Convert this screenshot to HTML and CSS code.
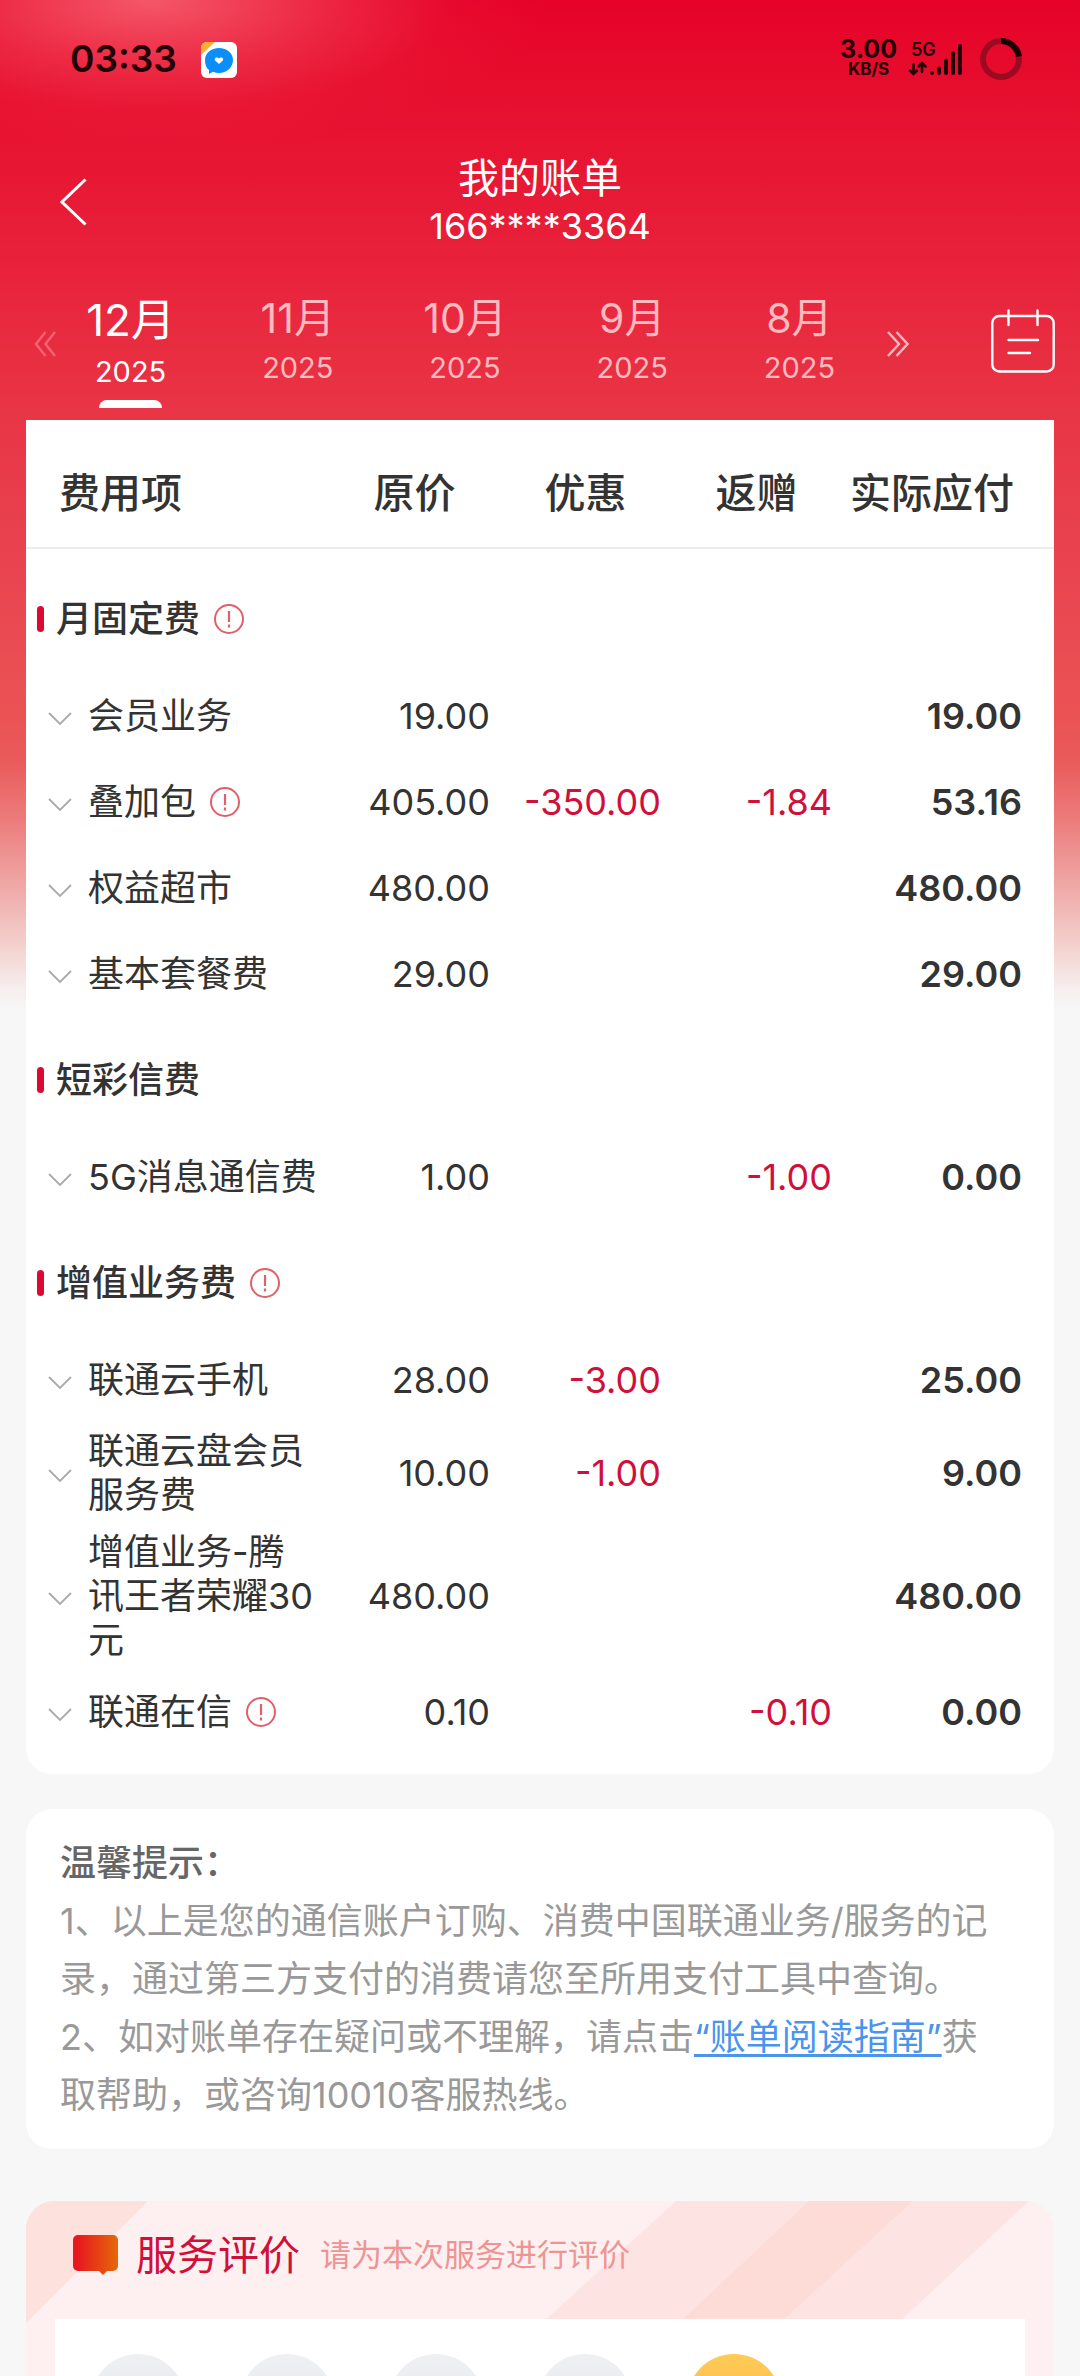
FILE: index.html
```html
<!DOCTYPE html>
<html lang="zh-CN">
<head>
<meta charset="utf-8">
<meta name="viewport" content="width=device-width, initial-scale=1">
<title>我的账单</title>
<link rel="stylesheet" href="styles.css">
</head>
<body>
<svg class="defs" aria-hidden="true">
  <symbol id="info" viewBox="0 0 30 30"><circle cx="15" cy="15" r="14" fill="none" stroke="currentColor" stroke-width="2"/><path d="M15 7v11M15 20.500v3" fill="none" stroke="currentColor" stroke-width="2.200"/></symbol>
  <symbol id="down" viewBox="0 0 24 14"><path d="M1 1l11 11L23 1" fill="none" stroke="currentColor" stroke-width="1.800"/></symbol>
</svg>
<div class="app">
  <header>
    <div class="status">
      <span class="clock">03:33</span>
      <svg class="chat" viewBox="0 0 36 36"><rect width="36" height="36" rx="6" fill="#fff"/><path d="M0 13V6a6 6 0 0 1 6-6h8z" fill="#fbb02d"/><path d="M18 6c8 0 14 5 14 12s-6 13-14 13c-2 0-4-.4-6-1.300L8 32V28c-3-2-4-6-4-10C4 11 10 6 18 6z" fill="#0a8ff8"/><path d="M18 22l-3.600-3.200c-1.400-1.400-.2-3.600 1.600-3.400 1 0 1.600.6 2 1.200.4-.6 1-1.200 2-1.200 1.800-.2 3 2 1.600 3.400z" fill="#fff"/></svg>
      <span class="speed"><b>3.00</b><small>KB/S</small></span>
      <span class="network">
        <b>5G</b>
        <svg viewBox="0 0 54 34" width="54" height="34"><g fill="none" stroke="#240006" stroke-linecap="round"><path d="M24 31v0M31 26.500v4.500M38 18.500V31M45 11.500V31M52 4v27" stroke-width="4"/><path d="M5.500 22.500V31M2 28.500l3.500 3.500L9 28.500M14 30v-8.500M10.500 24.500L14 21l3.500 3.500" stroke-width="2.600"/></g></svg>
      </span>
      <svg class="battery" viewBox="0 0 42 42"><circle cx="21" cy="21" r="18" fill="none" stroke="#9c0a22" stroke-width="6"/><path d="M21 3a18 18 0 0 1 17.800 15.500" fill="none" stroke="#1c0004" stroke-width="6"/></svg>
    </div>
    <div class="titlebar">
      <button class="back" aria-label="返回"><svg viewBox="0 0 27 48" width="27" height="48"><path d="M25.500 1.500L2 24l23.500 22.500" fill="none" stroke="#fff" stroke-width="3"/></svg></button>
      <h1>我的账单<span>166****3364</span></h1>
    </div>
    <nav class="months">
      <button class="step prev" aria-label="更早"><svg viewBox="0 0 22 26" width="22" height="26"><path d="M11.500 1L2 13l9.500 12M21 1l-9.500 12L21 25" fill="none" stroke="currentColor" stroke-width="2.400"/></svg></button>
      <div class="tabs" role="tablist">
        <button class="tab active" role="tab" aria-selected="true"><span class="month">12月</span><span class="year">2025</span></button>
        <button class="tab" role="tab"><span class="month">11月</span><span class="year">2025</span></button>
        <button class="tab" role="tab"><span class="month">10月</span><span class="year">2025</span></button>
        <button class="tab" role="tab"><span class="month">9月</span><span class="year">2025</span></button>
        <button class="tab" role="tab"><span class="month">8月</span><span class="year">2025</span></button>
      </div>
      <button class="step next" aria-label="更多"><svg viewBox="0 0 22 26" width="22" height="26"><path d="M1 1l11 12L1 25M9.500 1l11 12-11 12" fill="none" stroke="currentColor" stroke-width="2.400"/></svg></button>
      <button class="calendar" aria-label="日历"><svg viewBox="0 0 64 64" width="64" height="64"><g fill="none" stroke="#fff" stroke-width="2.400" stroke-linecap="round"><rect x="1.300" y="7" width="61.400" height="55.500" rx="7"/><path d="M17.500 1.500V16M46.500 1.500V16M17.500 31H47M17.500 44H39"/></g></svg></button>
    </nav>
  </header>

  <main>
    <section class="card bill">
      <table>
        <colgroup><col><col class="c-num"><col class="c-num"><col class="c-num"><col class="c-total"></colgroup>
        <thead><tr><th scope="col">费用项</th><th scope="col">原价</th><th scope="col">优惠</th><th scope="col">返赠</th><th scope="col">实际应付</th></tr></thead>
        <tbody>
          <tr class="group"><th colspan="5" scope="rowgroup"><div><span>月固定费</span><button class="info" aria-label="说明"><svg><use href="#info"/></svg></button></div></th></tr>
          <tr><th scope="row"><div class="item"><button class="more" aria-label="展开"><svg><use href="#down"/></svg></button><span>会员业务</span></div></th><td>19.00</td><td></td><td></td><td>19.00</td></tr>
          <tr><th scope="row"><div class="item"><button class="more" aria-label="展开"><svg><use href="#down"/></svg></button><span>叠加包</span><button class="info" aria-label="说明"><svg><use href="#info"/></svg></button></div></th><td>405.00</td><td>-350.00</td><td>-1.84</td><td>53.16</td></tr>
          <tr><th scope="row"><div class="item"><button class="more" aria-label="展开"><svg><use href="#down"/></svg></button><span>权益超市</span></div></th><td>480.00</td><td></td><td></td><td>480.00</td></tr>
          <tr><th scope="row"><div class="item"><button class="more" aria-label="展开"><svg><use href="#down"/></svg></button><span>基本套餐费</span></div></th><td>29.00</td><td></td><td></td><td>29.00</td></tr>
        </tbody>
        <tbody>
          <tr class="group"><th colspan="5" scope="rowgroup"><div><span>短彩信费</span></div></th></tr>
          <tr><th scope="row"><div class="item"><button class="more" aria-label="展开"><svg><use href="#down"/></svg></button><span>5G消息通信费</span></div></th><td>1.00</td><td></td><td>-1.00</td><td>0.00</td></tr>
        </tbody>
        <tbody>
          <tr class="group"><th colspan="5" scope="rowgroup"><div><span>增值业务费</span><button class="info" aria-label="说明"><svg><use href="#info"/></svg></button></div></th></tr>
          <tr><th scope="row"><div class="item"><button class="more" aria-label="展开"><svg><use href="#down"/></svg></button><span>联通云手机</span></div></th><td>28.00</td><td>-3.00</td><td></td><td>25.00</td></tr>
          <tr><th scope="row"><div class="item"><button class="more" aria-label="展开"><svg><use href="#down"/></svg></button><span>联通云盘会员服务费</span></div></th><td>10.00</td><td>-1.00</td><td></td><td>9.00</td></tr>
          <tr><th scope="row"><div class="item"><button class="more" aria-label="展开"><svg><use href="#down"/></svg></button><span>增值业务-腾<br>讯王者荣耀30元</span></div></th><td>480.00</td><td></td><td></td><td>480.00</td></tr>
          <tr><th scope="row"><div class="item"><button class="more" aria-label="展开"><svg><use href="#down"/></svg></button><span>联通在信</span><button class="info" aria-label="说明"><svg><use href="#info"/></svg></button></div></th><td>0.10</td><td></td><td>-0.10</td><td>0.00</td></tr>
        </tbody>
      </table>
    </section>

    <section class="card tips">
      <h2>温馨提示：</h2>
      <p>1、以上是您的通信账户订购、消费中国联通业务/服务的记录，通过第三方支付的消费请您至所用支付工具中查询。</p>
      <p>2、如对账单存在疑问或不理解，请点击<a href="#guide">“账单阅读指南”</a>获取帮助，或咨询10010客服热线。</p>
    </section>

    <section class="rating">
      <svg class="stripes" viewBox="0 0 1028 122" preserveAspectRatio="none" aria-hidden="true">
        <path d="M0 0h122L0 122z" fill="#fde1dd"/>
        <path d="M650 0h353L872 122H516z" fill="#fde4e2"/>
        <path d="M783 0h104L754 122H653z" fill="#fddad6" opacity=".8"/>
      </svg>
      <div class="rating-head">
        <svg viewBox="0 0 45 40" width="45" height="40"><defs><linearGradient id="warm"><stop offset=".1" stop-color="#e81820"/><stop offset="1" stop-color="#e46a06"/></linearGradient></defs><path d="M5 0h35a5 5 0 0 1 5 5v26a5 5 0 0 1-5 5h-6l-4 4-4-4H5a5 5 0 0 1-5-5V5a5 5 0 0 1 5-5z" fill="url(#warm)"/></svg>
        <h2>服务评价</h2>
        <p>请为本次服务进行评价</p>
      </div>
      <div class="scores" role="radiogroup" aria-label="服务评价">
        <input type="radio" name="score" aria-label="1">
        <input type="radio" name="score" aria-label="2">
        <input type="radio" name="score" aria-label="3">
        <input type="radio" name="score" aria-label="4">
        <input type="radio" name="score" aria-label="5" checked>
      </div>
    </section>
  </main>
</div>
</body>
</html>
```
FILE: styles.css
```css
* { box-sizing: border-box; margin: 0; padding: 0; }

body {
  font-family: Inter, "Noto Sans CJK SC", sans-serif;
  font-size: 36px;
  line-height: 44px;
  color: #333;
  background: #f7f7f7;
}

button { border: 0; background: none; color: inherit; font: inherit; }
svg { display: block; }
.defs { display: none; }

.app {
  height: 100vh;
  overflow: hidden;
  display: flex;
  flex-direction: column;
  background:
    radial-gradient(ellipse 400px 150px at 150px 0, rgba(250, 120, 130, .72), rgba(248, 100, 112, .35) 45%, rgba(245, 70, 85, .1) 75%, rgba(240, 50, 70, 0)),
    linear-gradient(#e60229 0, #e60a2b 60px, #e8203a 250px, #e83545 410px, #e94450 570px, #ea5254 710px, #ea5a5a 760px, #ec7c7c 820px, #efa4a3 880px, #f3cdc9 940px, #f6efee 990px, #f7f7f7 1010px);
}

/* Status bar */
.status { display: flex; align-items: center; height: 118px; padding: 0 58px 0 70px; color: #240006; }
.clock { font-size: 37px; font-weight: 600; }
.chat { width: 36px; height: 36px; margin: 2px auto 0 24px; }
.speed { display: flex; flex-direction: column; align-items: center; }
.speed b { font-size: 25px; line-height: 20px; font-weight: 700; }
.speed small { font-size: 17px; line-height: 20px; font-weight: 700; }
.network { display: grid; margin: 0 18px 0 11px; }
.network b { grid-area: 1 / 1; font-size: 18px; line-height: 16px; font-weight: 600; padding-left: 3px; }
.network svg { grid-area: 1 / 1; }
.battery { width: 42px; height: 42px; }

/* Title */
.titlebar { display: grid; grid-template-columns: 1fr auto 1fr; align-items: center; padding: 36px 60px 0; color: #fff; }
.titlebar h1 { font-size: 41px; line-height: 48px; font-weight: 400; text-align: center; }
.titlebar h1 span { display: block; font-size: 36px; line-height: 48px; }

/* Month tabs */
.months { display: flex; padding: 40px 25px 0 34px; color: #fff; }
.tabs { flex: 1; display: grid; grid-template-columns: repeat(5, 1fr); margin-left: -10px; }
.tab { display: flex; flex-direction: column; align-items: center; height: 130px; padding-left: 2px; color: #ffb9bf; }
.month { font-size: 41px; line-height: 56px; }
.year { font-size: 29px; line-height: 44px; }
.active { color: #fff; }
.active .month { font-size: 44px; line-height: 60px; }
.active::after { content: ""; width: 63px; height: 8px; margin-top: 6px; border-radius: 8px 8px 0 0; background: #fff; }
.step { align-self: flex-start; padding-top: 41px; }
.prev { color: #f26474; }
.next { margin: 0 82px 0 5px; color: #ffb9bf; }
.calendar { align-self: flex-start; padding-top: 19px; }

/* Cards */
main { flex: 1; min-height: 0; padding: 0 26px; display: flex; flex-direction: column; }
.card { flex: none; background: #fff; border-radius: 26px; }

.bill { border-radius: 0 0 26px 26px; padding-bottom: 19px; }
table { width: 100%; table-layout: fixed; border-collapse: collapse; }
.c-num { width: 171px; }
.c-total { width: 212px; }
thead th { padding: 51px 0 32px; font-size: 41px; font-weight: 500; border-bottom: 2px solid #ececec; }
thead th:first-child { padding-left: 33px; text-align: left; }
thead th:last-child { padding-right: 32px; white-space: nowrap; }
tbody th { font-weight: 400; text-align: left; }
tbody th[scope="row"], td { height: 86px; padding: 6px 0 7px; }
td { text-align: right; padding-right: 10px; }
td:nth-child(3), td:nth-child(4) { color: #d0103a; }
td:last-child { padding-right: 32px; font-weight: 600; }

.group th { padding: 41px 0 32px 11px; font-weight: 500; }
tbody:nth-of-type(1) .group th { padding-top: 48px; }
.group div { display: flex; align-items: center; }
.group div::before { content: ""; width: 7px; height: 26px; margin-right: 12px; border-radius: 4px; background: #dc0a32; }
.item { display: flex; align-items: center; padding-left: 22px; }
.more { flex: none; margin: 6px 16px 0 0; color: #aaa; }
.more svg { width: 24px; height: 14px; }
.info { flex: none; margin-left: 14px; color: #e0606a; }
.info svg { width: 30px; height: 30px; }

.tips { margin-top: 35px; padding: 25px 48px 25px 34px; line-height: 58px; color: #999; }
.tips h2 { font-size: 36px; font-weight: 500; color: #666; }
.tips a { color: #4a94ee; text-underline-offset: 4px; }

/* Rating */
.rating { flex: 1; min-height: 0; overflow: hidden; display: flex; flex-direction: column; position: relative; margin-top: 52px; padding: 0 29px; border-radius: 28px 28px 0 0; background: #fef0f0; }
.stripes { position: absolute; inset: 0 0 auto; width: 100%; height: 122px; }
.rating-head { position: relative; flex: none; display: flex; align-items: center; height: 118px; padding: 0 0 10px 18px; }
.rating-head h2 { margin: 0 20px 0 18px; font-size: 41px; font-weight: 400; color: #d0103a; }
.rating-head p { font-size: 31px; color: #ee9494; }
.scores { position: relative; flex: 1; min-height: 0; display: flex; gap: 55px; padding: 35px 36px 0; background: #fff; }
.scores input { appearance: none; flex: none; width: 94px; height: 94px; border-radius: 50%; background: linear-gradient(#eef0f2, #e2e6ee); }
.scores input:checked { background: linear-gradient(#ffcb55, #fbb04e); }
```
